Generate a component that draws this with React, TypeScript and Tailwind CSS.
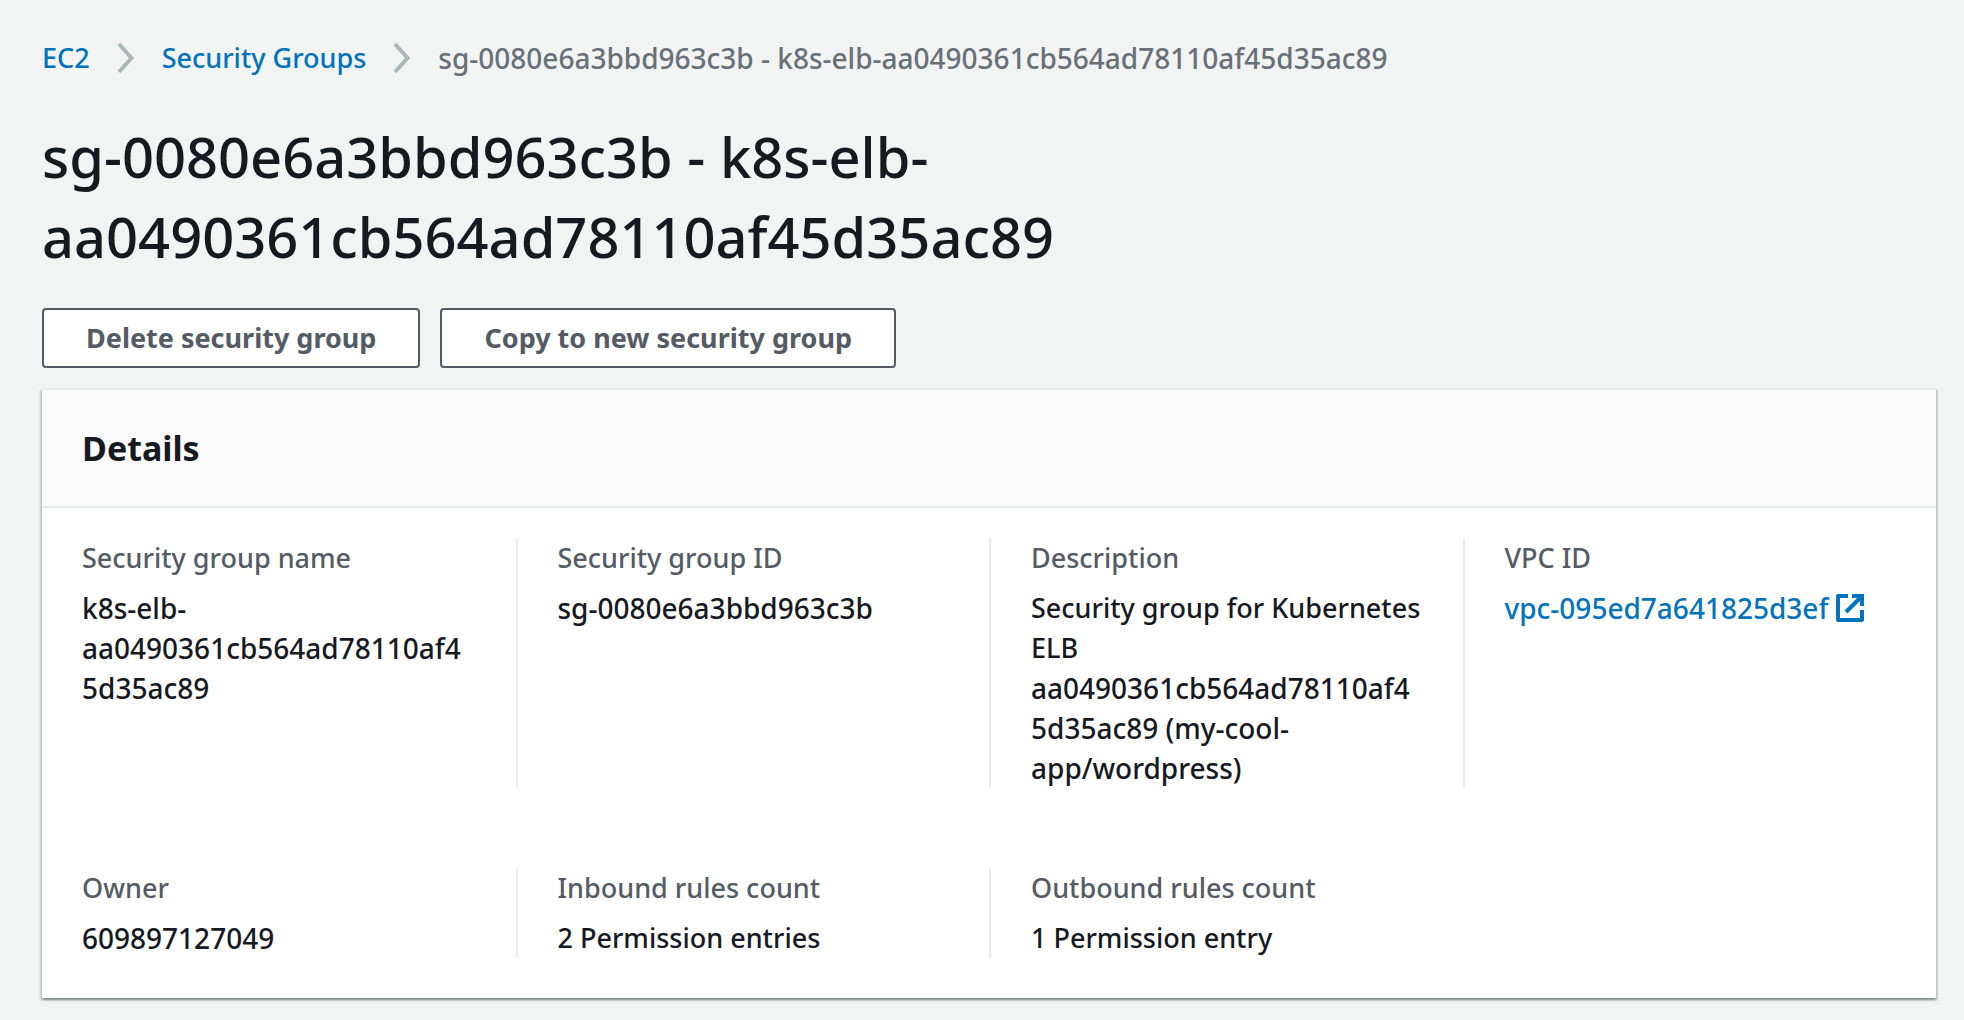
import type { ReactNode } from "react";

function ChevronIcon() {
  return (
    <svg
      className="mx-[26px] h-8 w-5 shrink-0"
      viewBox="0 0 20 32"
      fill="none"
      stroke="#aab7b8"
      strokeWidth="4"
      aria-hidden="true"
    >
      <path d="M3 2l12.5 14L3 30" />
    </svg>
  );
}

function ExternalIcon() {
  return (
    <svg
      className="h-8 w-8 shrink-0"
      viewBox="0 0 16 16"
      fill="none"
      stroke="currentColor"
      strokeWidth="2"
      aria-hidden="true"
    >
      <path d="M9 2h5v5" />
      <path d="M6 10l8-8" />
      <path d="M14 9v5H2V2h5" strokeLinejoin="round" />
    </svg>
  );
}

function ActionButton({ children }: { children: ReactNode }) {
  return (
    <button
      type="button"
      className="h-[60px] rounded-sm border-2 border-[#545b64] bg-white px-[42px] text-[27px] leading-10 font-bold text-[#545b64]"
    >
      {children}
    </button>
  );
}

/* Resource identifiers are set one step larger than the words around them. */
function Identifier({ children }: { children: ReactNode }) {
  return <span className="block min-w-0 text-[28px]">{children}</span>;
}

function Field({
  label,
  first = false,
  children,
}: {
  label: string;
  first?: boolean;
  children: ReactNode;
}) {
  return (
    <div
      className={
        first
          ? "min-w-0 pr-[42px] pl-10"
          : "min-w-0 border-l-2 border-[#eaeded] pr-10 pl-10"
      }
    >
      <dt className="mb-2.5 text-[#545b64]">{label}</dt>
      <dd className="break-words">{children}</dd>
    </div>
  );
}

export default function App() {
  return (
    <main className="min-h-screen bg-[#f2f3f3] pt-[38px] pr-7 pb-[22px] pl-[42px] font-['Noto_Sans',sans-serif] text-[27px] leading-10 font-medium text-[#16191f]">
      <nav aria-label="Breadcrumb">
        <ol className="flex items-center">
          <li className="flex items-center">
            <a href="#ec2" className="text-[#0073bb]">
              EC2
            </a>
            <ChevronIcon />
          </li>
          <li className="flex items-center">
            <a href="#security-groups" className="text-[#0073bb]">
              Security Groups
            </a>
            <ChevronIcon />
          </li>
          <li className="text-[#687078]" aria-current="page">
            <Identifier>
              sg-0080e6a3bbd963c3b - k8s-elb-aa0490361cb564ad78110af45d35ac89
            </Identifier>
          </li>
        </ol>
      </nav>

      <h1 className="mt-[38px] max-w-[1200px] text-[56px] leading-[80px] font-medium">
        sg-0080e6a3bbd963c3b - k8s-elb-aa0490361cb564ad78110af45d35ac89
      </h1>

      <div className="mt-8 flex gap-5">
        <ActionButton>Delete security group</ActionButton>
        <ActionButton>Copy to new security group</ActionButton>
      </div>

      <section className="mt-5 border-t-2 border-[#eaeded] bg-white shadow-[0_2px_2px_0_rgba(0,28,36,0.3),2px_2px_2px_0_rgba(0,28,36,0.15),-2px_2px_2px_0_rgba(0,28,36,0.15)]">
        <header className="border-b-2 border-[#eaeded] bg-[#fafafa] px-10 py-[34px]">
          <h2 className="text-[34px] leading-[48px] font-bold">Details</h2>
        </header>
        <dl className="grid grid-cols-4 gap-y-20 pt-[30px] pb-10">
          <Field label="Security group name" first>
            <Identifier>k8s-elb-aa0490361cb564ad78110af45d35ac89</Identifier>
          </Field>
          <Field label="Security group ID">
            <Identifier>sg-0080e6a3bbd963c3b</Identifier>
          </Field>
          <Field label="Description">
            Security group for Kubernetes ELB{" "}
            <Identifier>
              aa0490361cb564ad78110af45d35ac89 (my-cool-app/wordpress)
            </Identifier>
          </Field>
          <Field label="VPC ID">
            <a
              href="#vpc-095ed7a641825d3ef"
              className="flex items-center gap-1.5 text-[#0073bb]"
            >
              <Identifier>vpc-095ed7a641825d3ef</Identifier>
              <ExternalIcon />
            </a>
          </Field>
          <Field label="Owner" first>
            <Identifier>609897127049</Identifier>
          </Field>
          <Field label="Inbound rules count">2 Permission entries</Field>
          <Field label="Outbound rules count">1 Permission entry</Field>
        </dl>
      </section>
    </main>
  );
}
